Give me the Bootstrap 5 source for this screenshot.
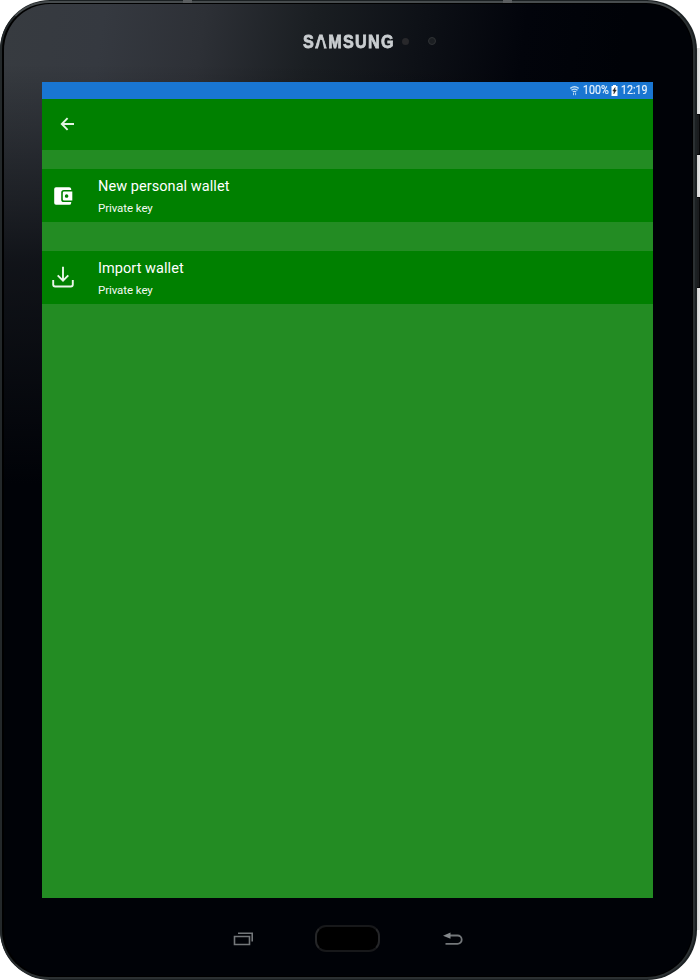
<!DOCTYPE html>
<html lang="en">
<head>
<meta charset="utf-8">
<meta name="viewport" content="width=device-width, initial-scale=1">
<title>Add wallet</title>
<link href="https://cdn.jsdelivr.net/npm/bootstrap@5.3.0/dist/css/bootstrap.min.css" rel="stylesheet">
<style>
body{margin:0;background:#fff;font-family:Roboto,"Liberation Sans",sans-serif;overflow:hidden}
.stage{width:700px;height:980px;background:linear-gradient(90deg,#fff 694px,#cfcfcf 696px,#e8e8e8 700px)}
.tablet{width:697px;height:980px;border-radius:50px;padding:1px 1px 0 0;background:#1c2123}
.rim{width:695px;height:978px;border:2px solid #2b3032;border-top-color:#474c4e;border-left-color:#23282a;border-radius:49px;background:#000}
.glass{margin:1px 1px 1px 2px;height:972px;border-radius:46px;background:linear-gradient(180deg,#00020700 60px,#000207b0 260px,#000207 480px),linear-gradient(98deg,#373b40 0,#353940 100px,#2d3036 200px,#1a1e22 310px,#0d1016 420px,#02040b 520px,#000207 620px)}
.bezel-top{height:78px}
.brand{font:700 18.5px/20px "Liberation Sans",sans-serif;color:#c9cdd0;-webkit-text-stroke:.8px #c9cdd0;letter-spacing:1.5px;width:92px;margin-left:298.5px;margin-top:27.5px}
.brand-in{transform:scaleX(.875);transform-origin:0 50%}
.open-a::after{content:"";position:absolute;left:3.6px;top:9px;width:6.6px;height:9px;background:#14181c;clip-path:polygon(35% 0,65% 0,100% 100%,0 100%)}
.dot{width:7px;height:7px;border-radius:50%;background:#28282b;filter:blur(.6px)}
.dot2{width:8px;height:8px;background:#1b1e22;border:1px solid #303235}
.screen{width:611px;height:816px;margin-left:38px;background:#238c23;color:#fff}
.status{height:17px;background:#1976d2;font-size:12px;line-height:17px;color:#e4f0fb}
.narrow{transform-origin:0 50%;transform:scaleX(.89);white-space:nowrap;-webkit-text-stroke:.2px #e4f0fb}
.appbar{height:51px;background:#008000}
.item{height:53px;background:#008000}
.item-icon{width:56px}
.title{font-size:14.5px;line-height:20px;letter-spacing:.06px}
.sub{font-size:11.5px;line-height:16px;letter-spacing:-.08px;margin-top:3px;color:#f4faf4}
.home{width:65px;height:27px;border-radius:11px;border:2px solid #17181a;border-left-color:#252628;border-right-color:#252628;background:#000}
.side-key{position:absolute;left:696px;width:4px;background:#1b1d1f;border:1px solid #08090a}
.nub{position:absolute;width:9px;height:3px;background:#5b5e60}
svg{display:block}
</style>
</head>
<body>
<div class="stage position-relative">
  <svg class="position-absolute top-0 start-0" width="700" height="980" aria-hidden="true"><path d="M0 0H60V60H0zM0 920H60V980H0zM640 0H700V48H640zM640 930H700V980H640z" fill="#fff"/></svg>
  <div class="side-key" style="top:114px;height:41px"></div>
  <div class="side-key" style="top:197px;height:91px"></div>
  <div class="tablet position-relative">
    <div class="nub" style="left:183px;top:0"></div>
    <div class="nub" style="left:503px;top:0"></div>
    <div class="rim">
      <div class="glass d-flex flex-column">
        <header class="bezel-top d-flex align-items-start flex-shrink-0">
          <div class="brand flex-shrink-0"><div class="brand-in">S<span class="open-a position-relative">A</span>MSUNG</div></div>
          <div class="dot" style="margin:34px 0 0 7px"></div>
          <div class="dot dot2" style="margin:33px 0 0 19px"></div>
        </header>
        <main class="screen flex-shrink-0">
          <div class="status d-flex align-items-center justify-content-end">
            <svg width="9" height="10" viewBox="0 0 9 10" fill="none" stroke="#c2def4"><path d="M.3 2.4Q4.5-.9 8.7 2.4M1.5 4.2Q4.5 2 7.5 4.2M2.9 6Q4.5 4.8 6.1 6" stroke-width="1.4"/><path d="M3.5 7v2.2M5.6 7v2.2" stroke-width=".9"/></svg>
            <span class="narrow" style="width:26px;margin-left:4px">100%</span>
            <svg style="margin-left:2px" width="7" height="11" viewBox="0 0 7 11"><path d="M2 0h3v1h1.5v10h-6V1H2z" fill="#fff"/><path d="M4.2 2.5 1.8 6h1.4L2.8 8.8 5.3 5H3.8z" fill="#222" stroke="#222" stroke-width=".5"/></svg>
            <span class="narrow" style="width:27px;margin-left:3px;margin-right:5px">12:19</span>
          </div>
          <div class="appbar d-flex align-items-center">
            <svg style="margin:-1px 0 0 18px" width="15" height="14" viewBox="0 0 15 14" fill="none" stroke="#e4f3e4" stroke-width="1.9"><path d="M14 7H2M7.6 1.2 1.8 7l5.8 5.8"/></svg>
          </div>
          <div class="item d-flex" style="margin-top:19px">
            <div class="item-icon d-flex align-items-center">
              <svg style="margin-left:12px" width="19" height="18" viewBox="0 0 19 18"><path d="M2 .2h13.200q1.900 0 2 1.900v.800H9.800q-2.600 0-2.600 2.600v7q0 2.600 2.600 2.600h7.400v.800q-.100 1.900-2 1.900H2Q.200 17.800.200 16V2Q.200.200 2 .200z" fill="#fff"/><path fill-rule="evenodd" d="M10 4.600h8.300v8.800H10q-1.200 0-1.200-1.200V5.800q0-1.200 1.200-1.200zM12.600 7.300a1.750 1.750 0 1 0 .01 0z" fill="#fff"/></svg>
            </div>
            <div style="padding-top:8px"><div class="title">New personal wallet</div><div class="sub">Private key</div></div>
          </div>
          <div class="item d-flex" style="margin-top:28.5px">
            <div class="item-icon d-flex align-items-center">
              <svg style="margin-left:10px" width="22" height="22" viewBox="0 0 22 22" fill="none" stroke="#e9f6e9" stroke-width="1.9"><path d="M11 .8V14.500M5.700 9.300 11 14.600l5.300-5.300M1.200 14v4.500q0 2 2 2h15.600q2 0 2-2V14"/></svg>
            </div>
            <div style="padding-top:8px"><div class="title">Import wallet</div><div class="sub">Private key</div></div>
          </div>
        </main>
        <footer class="d-flex align-items-start">
          <svg style="margin:34px 0 0 229px" width="21" height="14" viewBox="0 0 21 14" fill="none" stroke="#73777a" stroke-width="1.6"><path d="M1.500 4.500h15v8h-15zM5 1.300h14.200V9.500"/></svg>
          <div class="home" style="margin:27px 0 0 61px"></div>
          <svg style="margin:34px 0 0 63px" width="20" height="14" viewBox="0 0 20 14"><path d="M6 3.500h8.500a4.200 4.200 0 0 1 0 8.400H2.500" fill="none" stroke="#73777a" stroke-width="1.8"/><path d="M0 3.700 7.500.500v6.200z" fill="#85898c"/></svg>
        </footer>
      </div>
    </div>
  </div>
</div>
<script src="https://cdn.jsdelivr.net/npm/bootstrap@5.3.0/dist/js/bootstrap.bundle.min.js"></script>
</body>
</html>
